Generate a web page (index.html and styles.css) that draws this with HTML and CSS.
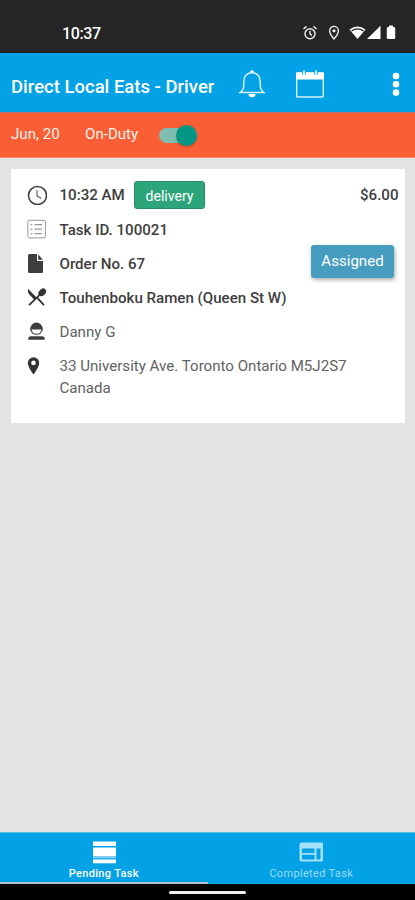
FILE: index.html
```html
<!DOCTYPE html>
<html lang="en">
<head>
<meta charset="utf-8">
<title>Direct Local Eats - Driver</title>
<link rel="stylesheet" href="styles.css">
</head>
<body>
<div class="status">
  <span class="clock">10:37</span>
  <div class="status-icons">
    <svg class="s-alarm" width="16" height="16" viewBox="0 0 16 16" fill="none" stroke="#eee" stroke-width="1.4"><circle cx="8" cy="8.7" r="5"/><path d="M1.5 4 4.5 1.4M14.5 4 11.5 1.4M8 5.8V9l2 1.4"/></svg>
    <svg class="s-pin" width="12" height="16" viewBox="0 0 12 16"><path d="M6 1.4a4.4 4.4 0 0 0-4.4 4.4C1.6 9 6 14 6 14s4.400-5 4.400-8.200A4.400 4.400 0 0 0 6 1.400z" fill="none" stroke="#eee" stroke-width="1.400"/><circle cx="6" cy="5.800" r="1.600" fill="#eee"/></svg>
    <svg class="s-wifi" width="17" height="16" viewBox="0 0 17 16"><path d="M.5 4.500Q8.500-1.500 16.500 4.500L8.500 14z" fill="#fff"/><path d="M2.500 6Q8.500 1.800 14.500 6" fill="none" stroke="#252525" stroke-width="1.300"/></svg>
    <svg class="s-signal" width="14" height="16" viewBox="0 0 14 16"><path d="M0 14 13.500.7V14z" fill="#fff"/></svg>
    <svg class="s-battery" width="10" height="16" viewBox="0 0 10 16"><path d="M3 .5h4V2h1q1.200 0 1.200 1.200v9.600Q9.200 14 8 14H2Q.8 14 .8 12.800V3.200Q.8 2 2 2h1z" fill="#fff"/></svg>
  </div>
</div>

<header class="appbar">
  <h1>Direct Local Eats - Driver</h1>
  <svg class="bell" width="26" height="28" viewBox="0 0 26 28"><path d="M1 22.500h24C21.500 20 21.200 18 21.200 13.500V11c0-5-3.500-8.300-8.200-8.300S4.800 6 4.800 11v2.500C4.800 18 4.500 20 1 22.500z" fill="none" stroke="#d9f2ff" stroke-width="1.500"/><path d="M11 2.300a2 2 0 0 1 4 0z" fill="#fff"/><path d="M9.500 24h7a3.500 3.300 0 0 1-7 0z" fill="#fff"/></svg>
  <svg class="calendar" width="28" height="28" viewBox="0 0 28 28"><rect x=".7" y="3" width="26.600" height="24" rx="1" fill="none" stroke="#d9f2ff" stroke-width="1.400"/><path d="M0 2.500h28v7H0z" fill="#fff"/><path d="M8 .3v4.500M20 .3v4.500" stroke="#03a1e5" stroke-width="3.400"/><path d="M8 .3V5M20 .3V5" stroke="#fff" stroke-width="1.500"/></svg>
  <svg class="more" width="8" height="25" viewBox="0 0 8 25" fill="#fff"><circle cx="4" cy="4" r="3.300"/><circle cx="4" cy="12.300" r="3.300"/><circle cx="4" cy="20.600" r="3.300"/></svg>
</header>

<div class="dutybar">
  <span class="date">Jun, 20</span>
  <span class="duty">On-Duty</span>
  <span class="switch"><span class="knob"></span></span>
</div>

<main>
  <article class="card">
    <div class="row strong">
      <svg viewBox="0 0 20 20" fill="none" stroke="#444" stroke-width="1.600"><circle cx="10.500" cy="10.500" r="9"/><path d="M10 5.300V10.800L14.200 13.300" stroke="#777" stroke-width="1.400"/></svg>
      <span class="time">10:32 AM</span><span class="tag">delivery</span><span class="price">$6.00</span>
    </div>
    <div class="row strong">
      <svg viewBox="0 0 20 20" fill="none" stroke="#999" stroke-width="1"><rect x=".8" y="1.300" width="17.600" height="17.600" rx="1.500"/><path d="M7.500 5.700H15M7.500 10.200H15M7.500 14.700H15M3.600 5.700h1.800M3.600 10.200h1.800M3.600 14.700h1.800" stroke-width="1.200"/></svg>
      <span class="task">Task ID. 100021</span>
    </div>
    <div class="row strong">
      <svg viewBox="0 0 20 20" fill="#3d3d3d"><path d="M2.500 1H10v6q0 1 1 1h5v10.500q0 1.500-1.500 1.500h-12Q1 20 1 18.500v-16Q1 1 2.500 1z"/><path d="M11.200 1.300 15.800 6.800h-4.600z"/></svg>
      <span class="order">Order No. 67</span><span class="assigned">Assigned</span>
    </div>
    <div class="row strong">
      <svg viewBox="0 0 20 20" fill="#333"><path d="M1.200 1.900 9.800 10.700 7.500 12.900 3 8.200Q0 5 1.200 1.900z"/><path d="M10.500 11.200 17 18.200M2 18.200 14 6.700" fill="none" stroke="#333" stroke-width="1.800"/><ellipse cx="15.200" cy="5.300" rx="3.200" ry="4.300" transform="rotate(48 15.200 5.300)"/></svg>
      <span class="place">Touhenboku Ramen (Queen St W)</span>
    </div>
    <div class="row">
      <svg viewBox="0 0 20 20"><path d="M1.300 18.800v-1.300q0-2.300 3-2.300h10.400q3 0 3 2.300v1.300z" fill="#3d3d3d"/><path d="M3.200 10.300V8.200a6.300 6.700 0 0 1 12.600 0v2.100L14.300 8.500H4.700z" fill="#3d3d3d"/><path d="M4.400 9Q4.700 13.300 9.500 13.300T14.600 9" fill="none" stroke="#555" stroke-width="1.200"/></svg>
      <span class="person">Danny G</span>
    </div>
    <div class="row address-row">
      <svg viewBox="0 0 20 20"><path d="M6.500 1.300A5.700 5.700 0 0 0 .8 7c0 4.300 5.700 11.500 5.700 11.500S12.200 11.300 12.200 7a5.700 5.700 0 0 0-5.700-5.700zm0 3.300a2.300 2.300 0 1 1 0 4.600 2.300 2.300 0 0 1 0-4.600z" fill="#333" fill-rule="evenodd"/></svg>
      <span class="address"><span class="line1">33 University Ave. Toronto Ontario M5J2S7</span><br><span class="line2">Canada</span></span>
    </div>
  </article>
</main>

<nav>
  <div class="tab active">
    <svg width="24" height="24" viewBox="0 0 24 24" fill="#fff"><path d="M1 1.500h23V6H1zM1 7.500h23v9H1z"/><path d="M1 17h23v1.500H1z" opacity=".45"/><path d="M1 19.500h23v3.800H1z"/></svg>
    <span class="pending">Pending Task</span>
  </div>
  <div class="tab">
    <svg width="24" height="24" viewBox="0 0 24 24"><path fill-rule="evenodd" d="M3 2.500h19Q24.500 2.500 24.500 5v14q0 2.500-2.500 2.500H3Q.5 21.500.5 19V5Q.5 2.500 3 2.500zM3 8.500V13h12.500V8.500zm0 6.300v4.700h12.500v-4.700zm14.500-6.300v11h4v-11z" fill="#a5e0fb"/></svg>
    <span class="completed">Completed Task</span>
  </div>
</nav>
<div class="sysbar"><span></span></div>
</body>
</html>
```

FILE: styles.css
```css
* { box-sizing: border-box; }
body {
  margin: 0;
  width: 415px;
  height: 900px;
  display: flex;
  flex-direction: column;
  overflow: hidden;
  background: #e3e4e6;
  font-family: Roboto, sans-serif;
  color: #3e3e3e;
  white-space: nowrap;
}
svg { display: block; flex: none; }

.status {
  height: 53px;
  padding: 12px 19px 0 62px;
  display: flex;
  align-items: center;
  justify-content: space-between;
  background: #252525;
  color: #fff;
}
.clock { padding-top: 1px; font-size: 16px; font-weight: 500; letter-spacing: -0.4px; }
.status-icons { display: flex; padding-top: 1px; }
.s-pin { margin-left: 10px; }
.s-wifi { margin-left: 9px; }
.s-signal { margin-left: 1px; }
.s-battery { margin-left: 5px; }

.appbar {
  height: 59px;
  padding: 3px 15px 0 11px;
  display: flex;
  align-items: center;
  background: #03a1e5;
  color: #fff;
}
h1 {
  width: 204px;
  margin: 5px 0 0;
  font-size: 18.5px;
  line-height: 24px;
  font-weight: 500;
}
.bell { margin-left: 24px; }
.calendar { margin-left: 31px; }
.more { margin-left: auto; }

.dutybar {
  height: 46px;
  padding: 0 11px 3px;
  display: flex;
  align-items: center;
  background: #f95e34;
  border-top: 1px solid #b27572;
  border-bottom: 1px solid #f58b6f;
  color: #fff3ee;
  font-size: 15.1px;
}
.date { width: 74px; }
.duty { width: 74px; }
.switch {
  width: 38px;
  height: 15px;
  margin-top: 4px;
  border-radius: 8px;
  background: #7fbfb1;
  display: flex;
  align-items: center;
  justify-content: flex-end;
}
.knob {
  width: 21px;
  height: 21px;
  flex: none;
  border-radius: 50%;
  background: #049785;
  box-shadow: 0 1px 2px #0004;
}

main { flex: 1; padding: 11px 10px 0 11px; }
.card {
  height: 254px;
  padding: 9px 7px 0 16px;
  background: #fff;
}
.row {
  height: 34px;
  display: flex;
  align-items: center;
  font-size: 15.1px;
  color: #626262;
}
.row > svg { width: 20px; height: 20px; margin-right: 12.5px; }
.strong { font-weight: 500; color: #3e3e3e; }
.task, .order, .place, .person { padding-top: 1px; }
.tag {
  width: 71px;
  height: 28px;
  margin-left: 9px;
  border: 1px solid #298b6b;
  border-radius: 3px;
  background: #2ba579;
  color: #fff;
  font-size: 14.1px;
  font-weight: 400;
  line-height: 28px;
  text-align: center;
}
.time { width: 65.5px; }
.price { margin-left: auto; margin-right: -0.5px; }
.assigned {
  width: 83px;
  height: 33px;
  margin: -3px 4px 0 auto;
  border-radius: 3px;
  background: #469dc0;
  box-shadow: 1px 2px 4px #0005;
  color: #fff;
  font-weight: 400;
  line-height: 33px;
  text-align: center;
}
.address-row { height: 56px; align-items: flex-start; padding-top: 7px; }
.address-row > svg { margin-top: 1px; }
.address { line-height: 22px; }

nav {
  height: 52px;
  display: flex;
  background: #03a1e5;
  border-top: 1px solid #5bb9df;
}
.tab {
  flex: 1;
  display: flex;
  flex-direction: column;
  align-items: center;
  padding-top: 7px;
  border-bottom: 2px solid #03a1e5;
  color: #9cddfa;
  font-size: 11px;
  line-height: 16px;
  letter-spacing: 0.33px;
}
.tab.active { color: #fff; border-bottom-color: #b3c4cd; font-weight: 500; }
.tab span { margin-top: 2px; }
.sysbar {
  height: 16px;
  padding-top: 7px;
  background: #000;
}
.sysbar span {
  display: block;
  width: 77px;
  height: 3px;
  margin: 0 auto;
  border-radius: 2px;
  background: #f0f0f0;
}
```
